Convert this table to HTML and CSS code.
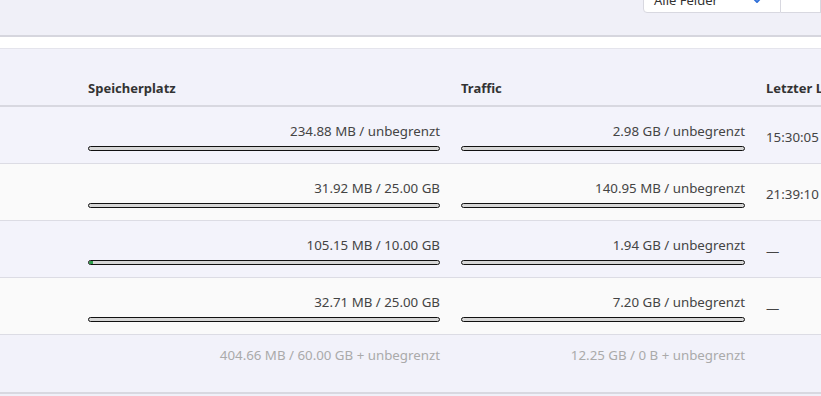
FILE: index.html
```html
<!DOCTYPE html>
<html lang="de">
<head>
<meta charset="utf-8">
<link rel="stylesheet" href="styles.css">
</head>
<body>
<div class="topbar">
  <div class="filters">
    <div class="select"><span class="select-text">Alle Felder</span>
      <svg class="chev" width="10" height="8" viewBox="0 0 10 8"><path d="M1.5 1.5 L5 5 L8.5 1.5" fill="none" stroke="#2f6fd8" stroke-width="1.8" stroke-linecap="round" stroke-linejoin="round"/></svg>
    </div>
    <div class="search"></div>
  </div>
</div>
<div class="gap"></div>
<div class="table">
  <div class="row head">
    <div class="cell c0"></div>
    <div class="cell c1"><span class="th">Speicherplatz</span></div>
    <div class="cell c2"><span class="th">Traffic</span></div>
    <div class="cell c3"><span class="th">Letzter Login</span></div>
  </div>
  <div class="row odd">
    <div class="cell c0"></div>
    <div class="cell c1"><div class="val">234.88 MB / unbegrenzt</div><div class="bar"></div></div>
    <div class="cell c2"><div class="val">2.98 GB / unbegrenzt</div><div class="bar"></div></div>
    <div class="cell c3"><div class="val left">15:30:05</div></div>
  </div>
  <div class="row even">
    <div class="cell c0"></div>
    <div class="cell c1"><div class="val">31.92 MB / 25.00 GB</div><div class="bar"></div></div>
    <div class="cell c2"><div class="val">140.95 MB / unbegrenzt</div><div class="bar"></div></div>
    <div class="cell c3"><div class="val left">21:39:10</div></div>
  </div>
  <div class="row odd">
    <div class="cell c0"></div>
    <div class="cell c1"><div class="val">105.15 MB / 10.00 GB</div><div class="bar"><div class="fill" style="width:1%"></div></div></div>
    <div class="cell c2"><div class="val">1.94 GB / unbegrenzt</div><div class="bar"></div></div>
    <div class="cell c3"><div class="val left">—</div></div>
  </div>
  <div class="row even">
    <div class="cell c0"></div>
    <div class="cell c1"><div class="val">32.71 MB / 25.00 GB</div><div class="bar"></div></div>
    <div class="cell c2"><div class="val">7.20 GB / unbegrenzt</div><div class="bar"></div></div>
    <div class="cell c3"><div class="val left">—</div></div>
  </div>
  <div class="row foot">
    <div class="cell c0"></div>
    <div class="cell c1"><div class="val total">404.66 MB / 60.00 GB + unbegrenzt</div></div>
    <div class="cell c2"><div class="val total">12.25 GB / 0 B + unbegrenzt</div></div>
    <div class="cell c3"></div>
  </div>
</div>
</body>
</html>
```
FILE: styles.css
```css
html, body {
  margin: 0;
  padding: 0;
}
body {
  width: 821px;
  height: 396px;
  overflow: hidden;
  background: #f0f0f8;
  font-family: "Noto Sans", "Open Sans", sans-serif;
  font-size: 13.3px;
  color: #444;
}
.topbar {
  height: 35px;
  background: #f0f0f8;
  border-bottom: 2px solid #d6d6de;
  display: flex;
  justify-content: flex-end;
  align-items: flex-start;
}
.filters {
  display: flex;
  margin-top: -8px;
}
.select {
  width: 138px;
  height: 21px;
  background: #fff;
  border: 1px solid #d8d8e0;
  border-radius: 4px 0 0 4px;
  display: flex;
  align-items: center;
  justify-content: space-between;
  padding: 0 18px 0 10px;
  box-sizing: border-box;
}
.select-text {
  color: #333;
  font-size: 13px;
  line-height: 14px;
  margin-top: -6px;
}
.chev {
  margin-top: -4px;
}
.search {
  width: 40px;
  height: 21px;
  background: #fff;
  border: 1px solid #d8d8e0;
  border-left: none;
  box-sizing: border-box;
}
.gap {
  height: 11px;
  background: #fff;
}
.table {
  border-top: 1px solid #e4e4ec;
}
.row {
  display: grid;
  grid-template-columns: 77px 373px 305px 1fr;
  border-bottom: 1px solid #dcdce4;
  box-sizing: border-box;
}
.cell {
  padding: 0 10px 0 11px;
  min-width: 0;
}
.c0 {
  padding: 0;
}
.c3 {
  padding-right: 0;
  white-space: nowrap;
  overflow: hidden;
}
.head {
  height: 58px;
  background: #f2f2fa;
  border-bottom: 2px solid #d8d8e0;
  align-items: end;
}
.th {
  display: block;
  font-weight: 700;
  color: #333;
  font-size: 13px;
  padding-bottom: 8px;
  white-space: nowrap;
}
.odd {
  height: 57px;
  background: #f3f3fb;
}
.even {
  height: 57px;
  background: #fafafa;
}
.foot {
  height: 59px;
  background: #f2f2fa;
  border-bottom: 2px solid #d8d8e0;
}
.val {
  text-align: right;
  margin-top: 15px;
  line-height: 18px;
  white-space: nowrap;
}
.val.left {
  text-align: left;
  margin-top: 21px;
}
.val.total {
  color: #aaa;
  margin-top: 11px;
}
.bar {
  margin-top: 6px;
  height: 5px;
  box-sizing: border-box;
  border: 1px solid #111;
  border-radius: 3px;
  background: #d6d6d6;
  overflow: hidden;
}
.fill {
  height: 100%;
  background: #2e9e4a;
}
```
